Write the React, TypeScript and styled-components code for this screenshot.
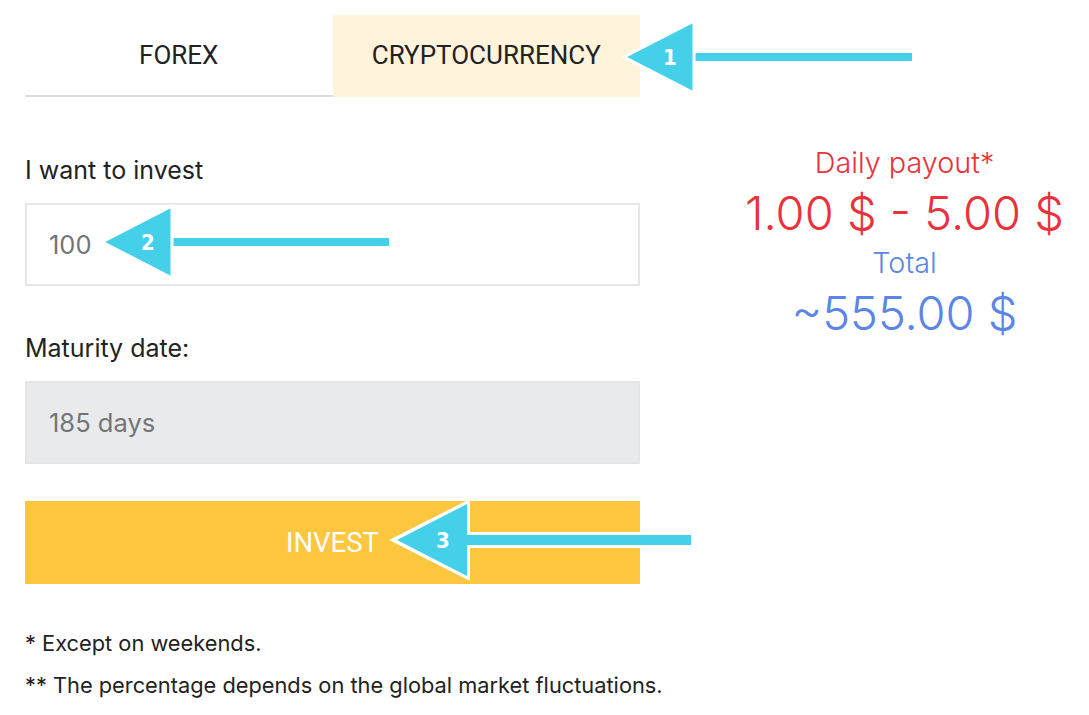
import React from "react";
import styled, { createGlobalStyle } from "styled-components";

const GlobalStyle = createGlobalStyle`
  html, body {
    margin: 0;
    padding: 0;
    background: #ffffff;
    font-family: Inter, "Open Sans", sans-serif;
    color: #222222;
  }
`;

const Page = styled.div`
  position: relative;
  width: 1089px;
  height: 715px;
  overflow: hidden;
  display: flex;
  align-items: flex-start;
  gap: 80px;
  padding: 15px 0 0 25px;
  box-sizing: border-box;
`;

const LeftColumn = styled.div`
  width: 615px;
  display: flex;
  flex-direction: column;

  & > * {
    flex-shrink: 0;
  }
`;

const Tabs = styled.div`
  display: flex;
  height: 82px;
`;

const Tab = styled.div<{ $active?: boolean }>`
  flex: 1;
  display: flex;
  align-items: center;
  justify-content: center;
  font-family: Roboto, "Liberation Sans", sans-serif;
  font-size: 26px;
  color: #222;
  background: ${(p) => (p.$active ? "#fff3dc" : "transparent")};
  border-bottom: 2px solid ${(p) => (p.$active ? "#fff3dc" : "#dddddd")};
  box-sizing: border-box;
`;

const Label = styled.div`
  font-size: 25px;
  color: #222;
  margin-top: 58px;
  line-height: 30px;
`;

const Field = styled.div<{ $disabled?: boolean }>`
  height: 83px;
  margin-top: 18px;
  box-sizing: border-box;
  border: 2px solid ${(p) => (p.$disabled ? "#e3e5e7" : "#e6e6e6")};
  background: ${(p) => (p.$disabled ? "#e8eaec" : "#ffffff")};
  display: flex;
  align-items: center;
  padding-left: 22px;
  font-size: 25.5px;
  color: #757575;
`;

const SecondLabel = styled(Label)`
  margin-top: 47px;
`;

const InvestButton = styled.button`
  height: 83px;
  margin-top: 37px;
  border: none;
  background: #fcc63f;
  color: #ffffff;
  font-family: Roboto, "Liberation Sans", sans-serif;
  font-size: 27.5px;
  cursor: pointer;
`;

const Notes = styled.div`
  margin-top: 46px;
  display: flex;
  flex-direction: column;
  gap: 16px;
  font-size: 21.8px;
  line-height: 26px;
  white-space: nowrap;
  color: #222;
`;

const RightColumn = styled.div`
  width: 369px;
  display: flex;
  flex-direction: column;
  align-items: center;
  padding-top: 130px;
`;

const Caption = styled.div<{ $color: string }>`
  font-size: 28.8px;
  font-weight: 300;
  line-height: 36px;
  color: ${(p) => p.$color};
`;

const Amount = styled.div<{ $color: string }>`
  font-size: 47px;
  font-weight: 300;
  line-height: 64px;
  color: ${(p) => p.$color};
`;

const ArrowBox = styled.svg<{ $x: number; $y: number }>`
  position: absolute;
  left: ${(p) => p.$x}px;
  top: ${(p) => p.$y}px;
  overflow: visible;
`;

const Arrow = ({
  x,
  y,
  length,
  label,
  outlined,
}: {
  x: number;
  y: number;
  length: number;
  label: string;
  outlined?: boolean;
}) => {
  // x,y = tip of the arrow head
  const head = 70;
  const half = 36;
  const shaft = outlined ? 10 : 8;
  return (
    <ArrowBox $x={x} $y={y - half} width={length} height={half * 2}>
      {outlined && (
        <>
          <rect
            x={head - 2}
            y={half - shaft / 2 - 3}
            width={length - head + 2}
            height={shaft + 6}
            fill="#ffffff"
          />
          <polygon
            points={`-8,${half} ${head + 3},-5 ${head + 3},${half * 2 + 5}`}
            fill="#ffffff"
          />
        </>
      )}
      <rect
        x={head - 2}
        y={half - shaft / 2}
        width={length - head + 2}
        height={shaft}
        fill="#45d0ea"
      />
      <polygon
        points={`0,${half} ${head},0 ${head},${half * 2}`}
        fill="#45d0ea"
        stroke={outlined ? "none" : "#ffffff"}
        strokeWidth={outlined ? 0 : 3}
        strokeLinejoin="miter"
      />
      <text
        x={head - 24}
        y={half + 8}
        textAnchor="middle"
        fontFamily="'DejaVu Sans Condensed', 'DejaVu Sans', sans-serif"
        fontWeight="bold"
        fontSize="22"
        fill="#ffffff"
      >
        {label}
      </text>
    </ArrowBox>
  );
};

export default function App() {
  return (
    <>
      <GlobalStyle />
      <Page>
        <LeftColumn>
          <Tabs>
            <Tab>FOREX</Tab>
            <Tab $active>CRYPTOCURRENCY</Tab>
          </Tabs>
          <Label>I want to invest</Label>
          <Field>100</Field>
          <SecondLabel>Maturity date:</SecondLabel>
          <Field $disabled>185 days</Field>
          <InvestButton>INVEST</InvestButton>
          <Notes>
            <div>* Except on weekends.</div>
            <div>** The percentage depends on the global market fluctuations.</div>
          </Notes>
        </LeftColumn>
        <RightColumn>
          <Caption $color="#e8323c">Daily payout*</Caption>
          <Amount $color="#e8323c">1.00 $ - 5.00 $</Amount>
          <Caption $color="#5b86e5">Total</Caption>
          <Amount $color="#5b86e5">~555.00 $</Amount>
        </RightColumn>
        <Arrow x={624} y={57} length={288} label="1" />
        <Arrow x={102} y={242} length={287} label="2" />
        <Arrow x={397} y={540} length={294} label="3" outlined />
      </Page>
    </>
  );
}
